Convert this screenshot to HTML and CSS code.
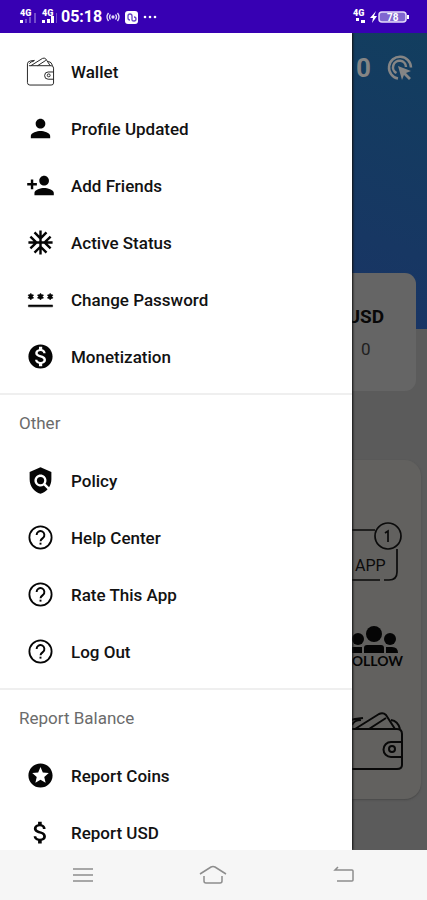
FILE: index.html
```html
<!DOCTYPE html>
<html lang="en">
<head>
<meta charset="utf-8">
<meta name="viewport" content="width=device-width, initial-scale=1">
<title>Menu</title>
<link rel="stylesheet" href="styles.css">
</head>
<body>
<svg class="defs" aria-hidden="true">
  <symbol id="help" viewBox="0 0 24 24"><circle cx="12" cy="12" r="9.200" fill="none" stroke="#050505" stroke-width="1.500"/><path d="M8.800 10a3.200 3.200 0 1 1 5.300 2.300Q12 13.800 12 15" fill="none" stroke="#050505" stroke-width="1.600"/><path d="M11.200 16.300h1.600v1.600h-1.600z"/></symbol>
  <symbol id="wallet" viewBox="0 0 60 60"><g fill="none" stroke="currentColor" stroke-linejoin="round"><path d="M6 18h46q5 0 5 5v31q0 4-5 4H8q-5 0-5-5V14q0-5 7-6l8-1M57 31H46a7 7 0 0 0 0 15h11M10 18l24-15q4-2 7 1l9 14M24 18l17-11M16 9q-7 0-9 5M46 9q7 1 9 9"/><circle cx="47" cy="38" r="3"/></g></symbol>
</svg>
<div class="phone">
  <header class="status">
    <div class="status-group">
      <svg width="38" height="18" viewBox="0 0 38 18" fill="#fff"><text x="1" y="8" class="net">4G</text><text x="23" y="8" class="net">4G</text><path d="M1 12h3v3H1zM23 12h3v3h-3zM28 11h3v4h-3zM32 8h3v7h-3z"/><path opacity=".3" d="M6 11h2v4H6zM10 9h2v6h-2zM15 5h2v10h-2zM37 5h1v10h-1z"/></svg>
      <span class="clock">05:18</span>
      <svg width="14" height="14" viewBox="0 0 14 14" fill="none" stroke="#e4dcfa" stroke-width="1.300"><circle cx="7" cy="7" r="1" fill="#fff"/><path d="M4.500 4.500q-2 2.500 0 5M9.500 4.500q2 2.500 0 5M2.500 3q-3 4 0 8M11.500 3q3 4 0 8"/></svg>
      <svg width="14" height="14" viewBox="0 0 14 14"><rect x="1" y="1" width="13" height="13" rx="3" fill="#fff"/><path d="M4 8V6q0-2 2-2t2 2v4q0 1 2 1t2-2-2-2M4 8q0 2 2 2" fill="none" stroke="#6542c8" stroke-width="1.300"/></svg>
      <svg width="16" height="14" viewBox="0 0 16 14" fill="#fff"><circle cx="3" cy="7" r="1.300"/><circle cx="8" cy="7" r="1.300"/><circle cx="13" cy="7" r="1.300"/></svg>
    </div>
    <svg width="60" height="18" viewBox="0 0 60 18" fill="#fff"><text x="1" y="8" class="net">4G</text><path d="M4 10h3v3H4zM9 12h4v3H9zM24 3l-6 7h3l-1 5 5-7h-3z"/><rect x="27" y="4" width="27" height="10" rx="3" fill="#8066d0" stroke="#e4dcfa" stroke-width="1.500"/><path d="M55 7h2v4h-2z"/><text x="35" y="13" class="charge">78</text></svg>
  </header>

  <div class="screen">
    <main class="page">
      <div class="toolbar">
        <span>0</span>
        <svg width="26" height="26" viewBox="0 0 26 26" fill="none" stroke="currentColor" stroke-width="2.500"><path d="M11 23.500A11 11 0 1 1 24 12.500M9.500 18A6.500 6.500 0 1 1 19 12"/><path d="M11 11l13 5-5 2 5 5-2 2-5-5-2 5z" fill="currentColor" stroke="none"/></svg>
      </div>
      <section class="balance"><div class="coin"><strong>USD</strong><span>0</span></div></section>
      <section class="tasks">
        <svg width="64" height="64" viewBox="0 0 64 64" fill="none" stroke="#0b0b0b" stroke-width="1.700"><path d="M4 10h31M57 29v23q0 8-8 8h-5M40 60H4"/><circle cx="48" cy="16" r="13"/><path d="M45 13l3-2v11" /><text x="15" y="51" class="app">APP</text></svg>
        <svg width="64" height="50" viewBox="0 0 64 50" fill="#050505"><circle cx="34" cy="12" r="8"/><circle cx="18" cy="17" r="6"/><circle cx="50" cy="17" r="6"/><path d="M24 31v-5q0-3 3-3h14q3 0 3 3v5zM8 31q0-6 5-6h9v6zM46 31v-6h6q6 0 6 6z"/><text x="63" y="44" class="follow">FOLLOW</text></svg>
        <svg width="64" height="64" class="big-wallet"><use href="#wallet" x="4" y="1" width="62" height="60"/></svg>
      </section>
    </main>

    <nav class="drawer" aria-label="Main">
      <section class="group">
        <a href="#"><svg class="thin" viewBox="0 0 60 60"><use href="#wallet"/></svg>Wallet</a>
        <a href="#"><svg viewBox="0 0 24 24"><path d="M12 12c2.210 0 4-1.790 4-4s-1.790-4-4-4-4 1.790-4 4 1.790 4 4 4zm0 2c-2.670 0-8 1.340-8 4v2h16v-2c0-2.660-5.330-4-8-4z"/></svg>Profile Updated</a>
        <a href="#"><svg viewBox="0 0 24 24"><path d="M15 12c2.210 0 4-1.790 4-4s-1.790-4-4-4-4 1.790-4 4 1.790 4 4 4zm-9-2V7H4v3H1v2h3v3h2v-3h3v-2H6zm9 4c-2.670 0-8 1.340-8 4v2h16v-2c0-2.660-5.330-4-8-4z"/></svg>Add Friends</a>
        <a href="#"><svg viewBox="0 0 24 24"><path d="M22 11h-4.170l3.240-3.240-1.410-1.420L15 11h-2V9l4.660-4.660-1.420-1.410L13 6.170V2h-2v4.170L7.760 2.930 6.340 4.340 11 9v2H9L4.340 6.340 2.930 7.760 6.170 11H2v2h4.170l-3.240 3.240 1.410 1.420L9 13h2v2l-4.660 4.660 1.420 1.410L11 17.830V22h2v-4.170l3.240 3.240 1.420-1.410L13 15v-2h2l4.660 4.660 1.410-1.420L17.830 13H22z"/></svg>Active Status</a>
        <a href="#"><svg viewBox="0 0 24 24"><path d="M2 16.500h20v1.600H2zM4 6.800l.7 1.100 1.700.4-1 1.200 1 1.300-1.700.5-.7 1.100-.7-1.100-1.700-.5 1-1.300-1-1.200 1.700-.4zM12 6.800l.8 1 1.800.5-1 1.200 1 1.300-1.800.5-.8 1.100-.8-1.100-1.800-.5 1-1.300-1-1.200 1.800-.5zM20 6.800l.7 1.100 1.700.4-1 1.200 1 1.300-1.700.5-.7 1.100-.7-1.100-1.700-.5 1-1.300-1-1.200 1.700-.4z" stroke="#050505" stroke-width=".4"/></svg>Change Password</a>
        <a href="#"><svg viewBox="0 0 24 24"><path d="M12 2C6.480 2 2 6.480 2 12s4.480 10 10 10 10-4.480 10-10S17.520 2 12 2zm1.410 16.090V20h-2.670v-1.930c-1.710-.36-3.160-1.460-3.270-3.400h1.960c.1 1.050.82 1.870 2.650 1.870 1.960 0 2.400-.98 2.400-1.590 0-.83-.44-1.610-2.670-2.140-2.480-.6-4.180-1.620-4.180-3.670 0-1.720 1.390-2.840 3.110-3.210V4h2.670v1.950c1.860.45 2.790 1.860 2.850 3.390H14.300c-.05-1.110-.64-1.870-2.220-1.870-1.500 0-2.400.68-2.400 1.640 0 .84.650 1.390 2.670 1.910s4.180 1.390 4.180 3.910c-.01 1.830-1.380 2.830-3.120 3.160z"/></svg>Monetization</a>
      </section>
      <section class="group">
        <h2>Other</h2>
        <a href="#"><svg viewBox="0 0 24 24"><path d="M21 5l-9-4-9 4v6c0 5.550 3.840 10.740 9 12 2.300-.56 4.330-1.900 5.880-3.710l-3.120-3.120c-1.940 1.290-4.580 1.070-6.290-.64-1.950-1.950-1.950-5.120 0-7.070 1.950-1.950 5.120-1.950 7.070 0 1.710 1.710 1.920 4.350.64 6.290l2.900 2.900C20.290 15.690 21 13.380 21 11V5z"/><circle cx="12" cy="12" r="3"/></svg>Policy</a>
        <a href="#"><svg><use href="#help"/></svg>Help Center</a>
        <a href="#"><svg><use href="#help"/></svg>Rate This App</a>
        <a href="#"><svg><use href="#help"/></svg>Log Out</a>
      </section>
      <section class="group">
        <h2>Report Balance</h2>
        <a href="#"><svg viewBox="0 0 24 24"><path d="M11.990 2C6.470 2 2 6.480 2 12s4.470 10 9.990 10C17.520 22 22 17.520 22 12S17.520 2 11.990 2zm4.240 16L12 15.450 7.770 18l1.120-4.810-3.730-3.230 4.920-.42L12 5l1.920 4.530 4.920.42-3.730 3.230L16.230 18z"/></svg>Report Coins</a>
        <a href="#"><svg viewBox="0 0 24 24"><path d="M11.800 10.900c-2.270-.59-3-1.200-3-2.150 0-1.090 1.010-1.850 2.700-1.850 1.780 0 2.440.85 2.500 2.100h2.210c-.07-1.720-1.120-3.300-3.210-3.810V3h-3v2.160c-1.940.42-3.500 1.680-3.500 3.610 0 2.310 1.910 3.460 4.700 4.130 2.500.6 3 1.480 3 2.410 0 .69-.49 1.790-2.700 1.790-2.060 0-2.870-.92-2.980-2.100h-2.200c.12 2.190 1.760 3.420 3.680 3.830V21h3v-2.150c1.950-.37 3.500-1.500 3.500-3.550 0-2.840-2.430-3.810-4.700-4.400z"/></svg>Report USD</a>
      </section>
    </nav>
  </div>

  <footer class="keys">
    <button aria-label="Recents"><svg width="22" height="22" viewBox="0 0 22 22"><path d="M1 5h20M1 11h20M1 17h20"/></svg></button>
    <button aria-label="Home"><svg width="28" height="22" viewBox="0 0 28 22"><path d="M1 10l11-7q2-1 4 0l11 7M5 12v5q0 2 2 2h14q2 0 2-2v-5"/></svg></button>
    <button aria-label="Back"><svg width="22" height="22" viewBox="0 0 22 22"><path d="M5 3L2 6h17q1 0 1 1v9q0 1-1 1H4"/></svg></button>
  </footer>
</div>
</body>
</html>
```
FILE: styles.css
```css
* { box-sizing: border-box; }
body { margin: 0; font-family: Roboto, "Liberation Sans", sans-serif; background: #f6f6f6; }
.defs { position: absolute; width: 0; height: 0; }
.phone { display: flex; flex-direction: column; height: 100vh; }

.status {
  display: flex; align-items: center; justify-content: space-between;
  height: 33px; padding: 0 15px 0 19px; background: #3700b3; color: #fff;
}
.status-group { display: flex; align-items: center; gap: 4px; }
.clock { font-size: 16px; font-weight: 700; }
.net { font-size: 9px; font-weight: 900; }
.charge { font-size: 10px; font-weight: 700; }

.screen { position: relative; flex: 1; min-height: 0; overflow: hidden; background: #5b5b5b; }
.page {
  height: 100%;
  background: linear-gradient(200deg, #123e5f, #1c3067) no-repeat top / 100% 296px;
}
.toolbar {
  display: flex; align-items: center; justify-content: flex-end; gap: 16px;
  height: 70px; padding-right: 14px; color: #858585;
  font-size: 26px; font-weight: 700;
}
.balance {
  display: flex; justify-content: flex-end;
  height: 118px; margin: 170px 11px 0; padding-right: 32px;
  border-radius: 11px; background: #656565;
}
.coin {
  display: flex; flex-direction: column; align-items: center; gap: 8px;
  padding-top: 32px; color: #080808; font-size: 17px; line-height: 24px;
}
.coin strong { font-size: 19px; }
.coin span { color: #202020; }
.tasks {
  display: flex; flex-direction: column; align-items: flex-end; gap: 38px;
  height: 339px; margin: 69px 6px 0; padding: 60px 17px 0;
  border-radius: 16px; background: #62615f; box-shadow: 0 1px 2px #484848;
}
.app { font-size: 16px; fill: #0b0b0b; stroke: none; }
.follow { font-family: Lato, sans-serif; font-size: 14px; font-weight: 700; text-anchor: end; }
.big-wallet { color: #080808; stroke-width: 2px; }

.drawer {
  position: absolute; inset: 0 auto 0 0; width: 82.5%; padding-top: 10px;
  overflow: hidden; background: #fff; box-shadow: 1px 0 2px #111;
}
.group + .group { margin-top: 8px; border-top: 2px solid #efefef; }
.group h2 {
  margin: 0; padding-left: 19px; line-height: 57px;
  font-size: 17px; font-weight: 400; color: #6b6b6b;
}
.group a {
  display: flex; align-items: center; gap: 16px; height: 57px; padding-left: 26px;
  font-size: 17px; font-weight: 500; color: #121212; text-decoration: none;
}
.group svg { width: 29px; height: 29px; fill: #050505; }
.group .thin { color: #222; stroke-width: 2px; }

.keys { display: flex; align-items: center; height: 50px; padding: 0 18px; background: #f6f6f6; }
.keys button { flex: 1; display: flex; justify-content: center; padding: 0; border: 0; background: none; }
.keys svg { fill: none; stroke: #8d8d8d; stroke-width: 1.500px; }
```
